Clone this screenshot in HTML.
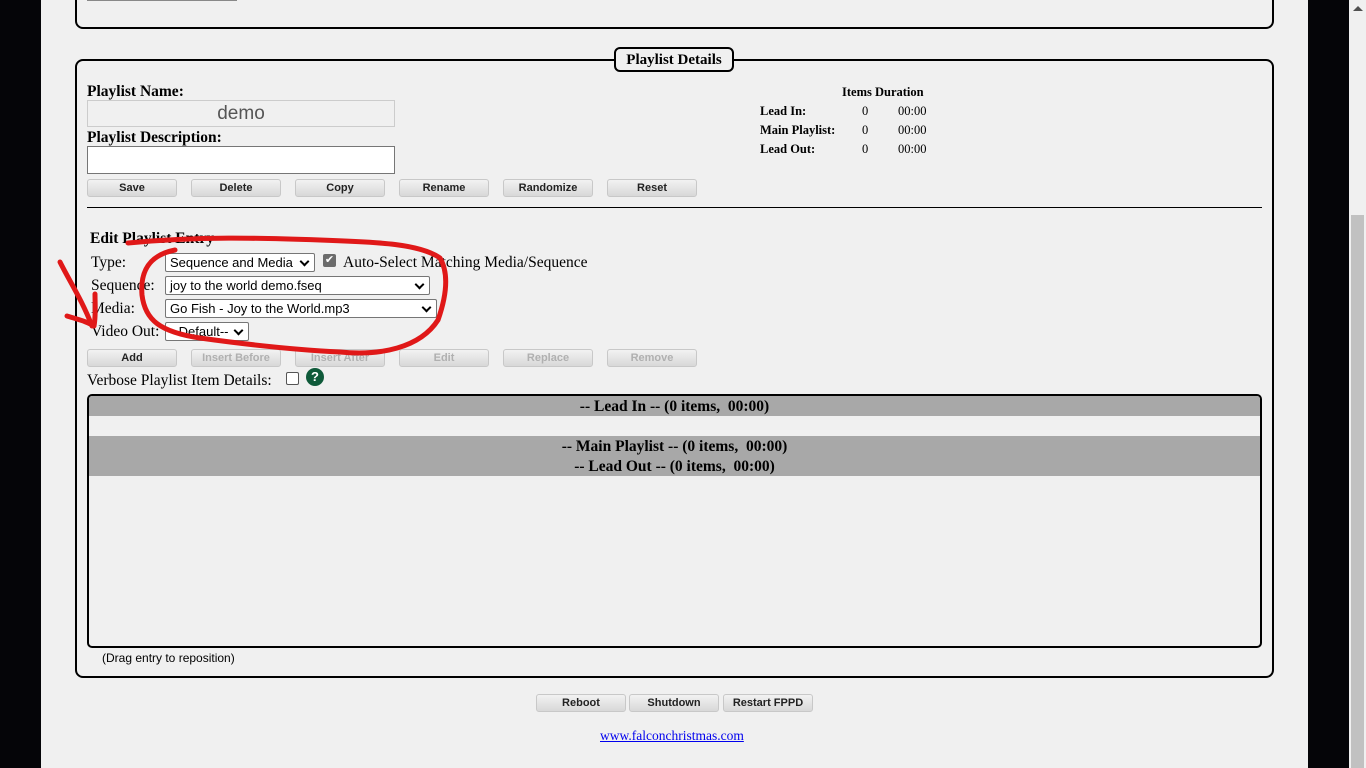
<!DOCTYPE html>
<html><head><meta charset="utf-8"><style>
*{box-sizing:border-box}
body{margin:0;width:1366px;height:768px;background:#050508;position:relative;overflow:hidden;font-family:"Liberation Serif",serif;color:#000}
.a{position:absolute}
.page{left:41px;top:0;width:1267px;height:768px;background:#f0f0f0}
.fs{border:2px solid #000;border-radius:8px}
.btn{position:absolute;width:90px;height:18px;border:1px solid #c8c8c8;border-radius:3px;background:linear-gradient(#f2f2f2,#d8d8d8);font:bold 11px "Liberation Sans",sans-serif;text-align:center;line-height:17px;color:#222}
.dis{color:#b0b0b0}
.b{font-weight:bold}
.sel{position:absolute;height:19px;border:1px solid #767676;border-radius:2px;background:#fff;font:13px "Liberation Sans",sans-serif;padding-left:4px;line-height:17px}
.sel:after{content:"";position:absolute;right:6px;top:4px;width:5px;height:5px;border-right:2px solid #000;border-bottom:2px solid #000;transform:rotate(45deg)}
.lbl{font-size:15.5px}
.t{font-size:12.5px;font-weight:bold}
.bar{position:absolute;left:89px;width:1171px;background:#a8a8a8;text-align:center;font-weight:bold;font-size:15.5px;line-height:20px}
</style></head><body>
<div class="a page"></div>
<div class="a fs" style="left:75px;top:-10px;width:1199px;height:39px"></div>
<div class="a" style="left:87px;top:0;width:150px;height:1px;background:#888"></div>
<div class="a fs" style="left:75px;top:59px;width:1199px;height:619px"></div>
<div class="a" style="left:614px;top:47px;width:120px;height:25px;border:2px solid #000;border-radius:6px;background:#f0f0f0;text-align:center;font-weight:bold;font-size:15px;line-height:23px">Playlist Details</div>
<div class="a b" style="left:87px;top:83px;font-size:15.5px">Playlist Name:</div>
<div class="a" style="left:87px;top:100px;width:308px;height:27px;border:1px solid #ccc;background:#f0f0f0;font:19px 'Liberation Sans',sans-serif;color:#555;text-align:center;line-height:26px">demo</div>
<div class="a b" style="left:87px;top:129px;font-size:15.5px">Playlist Description:</div>
<div class="a" style="left:87px;top:146px;width:308px;height:28px;border:1px solid #767676;background:#fff"></div>
<div class="btn" style="left:87px;top:179px">Save</div>
<div class="btn" style="left:191px;top:179px">Delete</div>
<div class="btn" style="left:295px;top:179px">Copy</div>
<div class="btn" style="left:399px;top:179px">Rename</div>
<div class="btn" style="left:503px;top:179px">Randomize</div>
<div class="btn" style="left:607px;top:179px">Reset</div>
<div class="a t" style="left:842px;top:85px">Items Duration</div>
<div class="a t" style="left:760px;top:104px">Lead In:</div>
<div class="a t" style="left:760px;top:123px">Main Playlist:</div>
<div class="a t" style="left:760px;top:142px">Lead Out:</div>
<div class="a" style="left:862px;top:102px;font-size:12.5px;line-height:19px">0<br>0<br>0</div>
<div class="a" style="left:898px;top:102px;font-size:12.5px;line-height:19px">00:00<br>00:00<br>00:00</div>
<div class="a" style="left:87px;top:207px;width:1175px;height:1px;background:#000"></div>
<div class="a b" style="left:90px;top:230px;font-size:15.5px">Edit Playlist Entry</div>
<div class="a lbl" style="left:91px;top:254px">Type:</div>
<div class="a lbl" style="left:91px;top:277px">Sequence:</div>
<div class="a lbl" style="left:91px;top:300px">Media:</div>
<div class="a lbl" style="left:91px;top:323px">Video Out:</div>
<div class="sel" style="left:165px;top:253px;width:150px">Sequence and Media</div>
<div class="a" style="left:323px;top:254px;width:13px;height:13px;background:#6b6b6b;border-radius:2px;color:#fff;font-size:11px;line-height:13px;text-align:center">✔</div>
<div class="a lbl" style="left:343px;top:254px">Auto-Select Matching Media/Sequence</div>
<div class="sel" style="left:165px;top:276px;width:265px">joy to the world demo.fseq</div>
<div class="sel" style="left:165px;top:299px;width:272px">Go Fish - Joy to the World.mp3</div>
<div class="sel" style="left:165px;top:322px;width:84px">--Default--</div>
<div class="btn" style="left:87px;top:349px">Add</div>
<div class="btn dis" style="left:191px;top:349px">Insert Before</div>
<div class="btn dis" style="left:295px;top:349px">Insert After</div>
<div class="btn dis" style="left:399px;top:349px">Edit</div>
<div class="btn dis" style="left:503px;top:349px">Replace</div>
<div class="btn dis" style="left:607px;top:349px">Remove</div>
<div class="a lbl" style="left:87px;top:372px">Verbose Playlist Item Details:</div>
<div class="a" style="left:286px;top:372px;width:13px;height:13px;border:1px solid #555;border-radius:2px;background:#fff"></div>
<div class="a" style="left:306px;top:368px;width:18px;height:18px;border-radius:50%;background:#0f5a3a;color:#fff;font:bold 13px 'Liberation Sans',sans-serif;text-align:center;line-height:18px">?</div>
<div class="a" style="left:87px;top:394px;width:1175px;height:254px;border:2px solid #000;border-radius:5px;background:#f0f0f0;overflow:hidden"></div>
<div class="bar" style="top:396px;height:20px;border-radius:3px 3px 0 0;line-height:21px">-- Lead In -- (0 items,&nbsp; 00:00)</div>
<div class="bar" style="top:436px;height:40px;line-height:20px;padding-top:1px">-- Main Playlist -- (0 items,&nbsp; 00:00)<br>-- Lead Out -- (0 items,&nbsp; 00:00)</div>
<div class="a" style="left:102px;top:651px;font:12px 'Liberation Sans',sans-serif">(Drag entry to reposition)</div>
<div class="btn" style="left:536px;top:694px">Reboot</div>
<div class="btn" style="left:629px;top:694px">Shutdown</div>
<div class="btn" style="left:723px;top:694px">Restart FPPD</div>
<div class="a" style="left:600px;top:728px;font-size:13.5px;color:#00e;text-decoration:underline">www.falconchristmas.com</div>
<div class="a" style="left:1349px;top:0;width:17px;height:768px;background:#f0f0f0"></div>
<div class="a" style="left:1351px;top:215px;width:13px;height:553px;background:#c1c1c1"></div>
<div class="a" style="left:1353px;top:6px;width:0;height:0;border-left:5px solid transparent;border-right:5px solid transparent;border-bottom:5px solid #505050"></div>
<svg class="a" style="left:0;top:0" width="1366" height="768" fill="none" stroke="#e01818" stroke-width="5" stroke-linecap="round" stroke-linejoin="round">
<path d="M128 243 C200 236 260 238 320 240 C380 242 420 244 440 258 C450 275 445 300 438 320 C420 348 380 356 340 352 C300 350 250 345 200 338 C160 332 145 320 142 295 C140 270 150 255 175 250"/>
<path d="M60 262 C70 282 82 300 92 326"/>
<path d="M67 316 C80 320 88 322 94 326 C96 315 95 305 95 294"/>
</svg>
</body></html>
